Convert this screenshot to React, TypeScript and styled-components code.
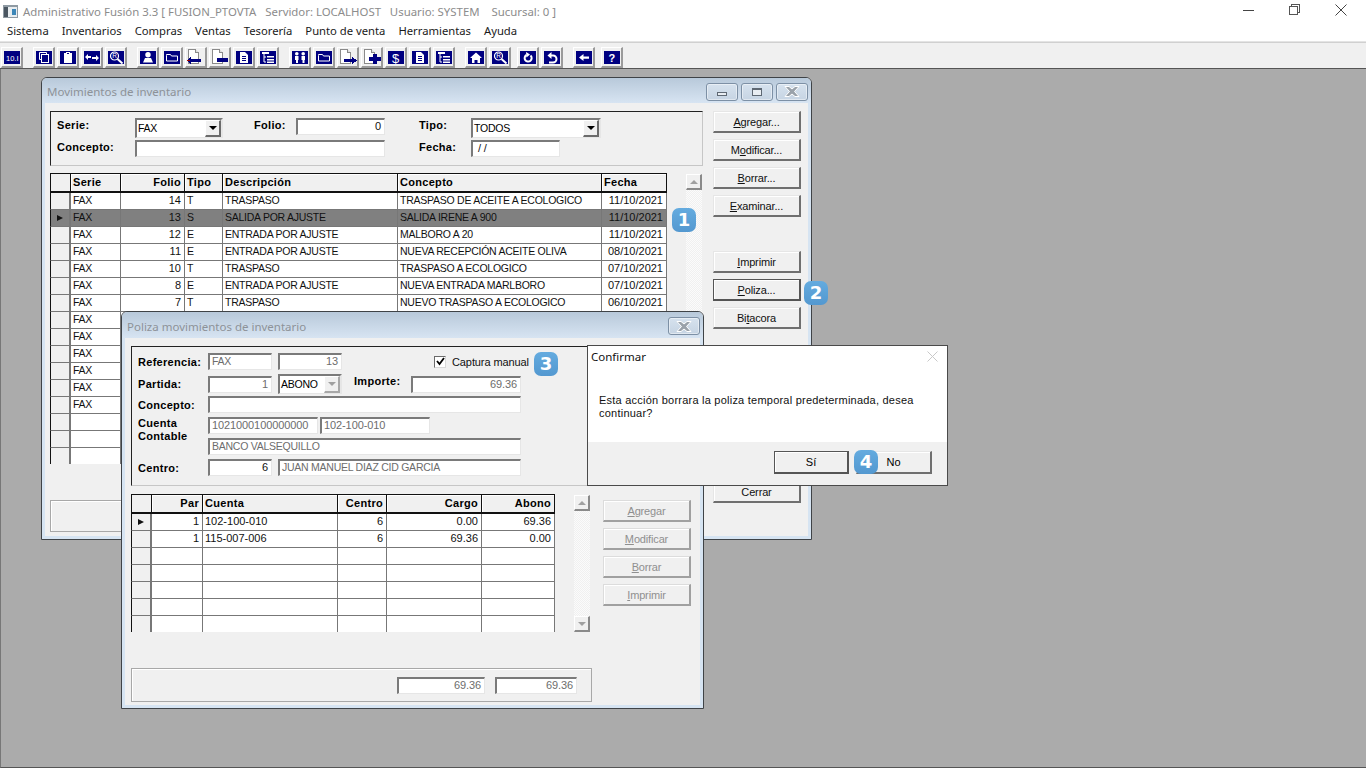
import React from "react";
import styled, { createGlobalStyle } from "styled-components";

const UI = `"Liberation Sans", Arial, sans-serif`;
const SEGOE = `"Noto Sans", "Open Sans", sans-serif`;

const Global = createGlobalStyle`
  html, body { margin: 0; padding: 0; height: 100%; overflow: hidden; }
  body { font-family: ${UI}; font-size: 11px; color: #000; background: #ababab; }
  #root { height: 100%; }
  * { box-sizing: border-box; }
`;

/* ---------- toolbar icons ---------- */

const Navy: React.FC<{ children: React.ReactNode }> = ({ children }) => (
  <svg width="16" height="13" viewBox="0 0 16 13">
    <rect width="16" height="13" fill="#000080" />
    {children}
  </svg>
);

const Paper: React.FC<{ children: React.ReactNode }> = ({ children }) => (
  <svg width="18" height="16" viewBox="0 0 18 16" shapeRendering="crispEdges">
    <path d="M1.5 .5h7l3 3v11h-10z" fill="#fff" stroke="#8a8a8a" />
    <path d="M8.5 .5v3h3" fill="#ddd" stroke="#8a8a8a" />
    {children}
  </svg>
);

const white = { fill: "#fff" };
const line = { fill: "none", stroke: "#fff" };

const docLines = (
  <Navy>
    <path d="M4 1h5l3 3v8H4z" {...white} />
    <path d="M6 5h4v1H6zM6 7h4v1H6zM6 9h4v1H6z" fill="#000080" />
  </Navy>
);
const tree = (
  <Navy>
    <path d="M2 1h7v2H2z" {...white} />
    <path d="M4 3v8h2M4 6h2" {...line} />
    <path d="M7 5h7v1.500H7zM7 8h7v1.500H7zM7 10.500h7v1.500H7z" {...white} />
  </Navy>
);
const folder = (
  <Navy>
    <path d="M2.500 4.500v-1h4l1 1.500h6v5h-11z" {...line} />
  </Navy>
);
const magnifier = (
  <Navy>
    <circle cx="6.500" cy="5" r="4" {...line} strokeWidth="1.200" />
    <text x="4.300" y="7.300" fontSize="6.500" fontFamily={UI} fill="#fff">R</text>
    <path d="M9.500 8l5 4.500" stroke="#fff" strokeWidth="2" />
  </Navy>
);

type Tool = { icon: React.ReactNode; gap?: number };

const tools: Tool[] = [
  { icon: <Navy><text x="2" y="9.500" fontSize="7.500" fontFamily={UI} fill="#fff">10.I</text></Navy> },
  { gap: 8, icon: <Navy><path d="M3.500 1.500h7v2M3.500 1.500v7h2" {...line} /><rect x="5.500" y="3.500" width="7" height="8" {...line} /></Navy> },
  { icon: <Navy><path d="M4 2h2V1h4v1h2v10H4z" {...white} /><path d="M7 2h2v1H7z" fill="#000080" /></Navy> },
  { icon: <Navy><path d="M1 6l3-3v2h3v2H4v2zM15 7l-3-3v2H8v2h4v2z" {...white} /></Navy> },
  { icon: magnifier },
  { gap: 8, icon: <Navy><circle cx="8" cy="3.700" r="2.700" {...white} /><path d="M3 11.500L5 7h6l2 4.500z" {...white} /></Navy> },
  { icon: folder },
  { icon: <Paper><path d="M4 8v2h10v3H4v2l-4-3.500z" fill="#000080" /><path d="M0 11h3v1H0z" fill="#a00000" /></Paper> },
  { icon: <Paper><path d="M6 9h11v4H6z" fill="#000080" /></Paper> },
  { icon: docLines },
  { icon: tree },
  { gap: 8, icon: <Navy><circle cx="4.800" cy="2.800" r="1.800" {...white} /><circle cx="11.200" cy="2.800" r="1.800" {...white} /><path d="M3 5h3.500v4H6v3H4V9H3zM9.500 5H13v4h-.5v3h-2V9h-1z" {...white} /></Navy> },
  { icon: folder },
  { icon: <Paper><path d="M13 8v2H5v3h8v2l5-3.500z" fill="#000080" /></Paper> },
  { icon: <Paper><path d="M10 5h4v3h4v4h-4v3h-4v-3H6V8h4z" fill="#000080" /></Paper> },
  { icon: <Navy><text x="4" y="11.500" fontSize="13" fontFamily={UI} fill="#fff">$</text></Navy> },
  { icon: docLines },
  { icon: tree },
  { gap: 8, icon: <Navy><path d="M8 1.500l6 5.500h-2v5H9.500V9h-3v3H4V7H2z" {...white} /></Navy> },
  { icon: magnifier },
  { gap: 4, icon: <Navy><path d="M10.500 4.500a3.500 3.500 0 1 1-4-.5" {...line} strokeWidth="2" /><path d="M6 1l4 2.500L6.500 6.500z" {...white} /></Navy> },
  { icon: <Navy><path d="M6 4.500h3a3 3 0 0 1 0 7H5" {...line} strokeWidth="2" /><path d="M7.500 1L3.500 4.500 7.500 8z" {...white} /></Navy> },
  { gap: 8, icon: <Navy><path d="M3 6.500L7.500 3v2.500H13v2.200H7.500V10z" {...white} /></Navy> },
  { gap: 4, icon: <Navy><text x="4.500" y="11" fontSize="11" fontWeight="700" fontFamily={UI} fill="#fff">?</text></Navy> },
];

/* ---------- data ---------- */

const movimientos = [
  ["FAX", "14", "T", "TRASPASO", "TRASPASO DE ACEITE A ECOLOGICO", "11/10/2021"],
  ["FAX", "13", "S", "SALIDA POR AJUSTE", "SALIDA IRENE A 900", "11/10/2021"],
  ["FAX", "12", "E", "ENTRADA POR AJUSTE", "MALBORO A 20", "11/10/2021"],
  ["FAX", "11", "E", "ENTRADA POR AJUSTE", "NUEVA RECEPCIÓN ACEITE OLIVA", "08/10/2021"],
  ["FAX", "10", "T", "TRASPASO", "TRASPASO A ECOLOGICO", "07/10/2021"],
  ["FAX", "8", "E", "ENTRADA POR AJUSTE", "NUEVA ENTRADA MARLBORO", "07/10/2021"],
  ["FAX", "7", "T", "TRASPASO", "NUEVO TRASPASO A ECOLOGICO", "06/10/2021"],
  ["FAX", "", "", "", "", ""],
  ["FAX", "", "", "", "", ""],
  ["FAX", "", "", "", "", ""],
  ["FAX", "", "", "", "", ""],
  ["FAX", "", "", "", "", ""],
  ["FAX", "", "", "", "", ""],
  ["", "", "", "", "", ""],
  ["", "", "", "", "", ""],
  ["", "", "", "", "", ""],
];

const partidas = [
  ["1", "102-100-010", "6", "0.00", "69.36"],
  ["1", "115-007-006", "6", "69.36", "0.00"],
  ["", "", "", "", ""],
  ["", "", "", "", ""],
  ["", "", "", "", ""],
  ["", "", "", "", ""],
  ["", "", "", "", ""],
];

type Col = { title: string; right?: boolean; cellRight?: boolean; width: number };

const movCols: Col[] = [
  { title: "Serie", width: 50 },
  { title: "Folio", right: true, cellRight: true, width: 64 },
  { title: "Tipo", width: 38 },
  { title: "Descripción", width: 175 },
  { title: "Concepto", width: 204 },
  { title: "Fecha", cellRight: true, width: 65 },
];

const parCols: Col[] = [
  { title: "Par", right: true, cellRight: true, width: 51 },
  { title: "Cuenta", width: 135 },
  { title: "Centro", right: true, cellRight: true, width: 49 },
  { title: "Cargo", right: true, cellRight: true, width: 95 },
  { title: "Abono", right: true, cellRight: true, width: 73 },
];

const menus = ["Sistema", "Inventarios", "Compras", "Ventas", "Tesorería", "Punto de venta", "Herramientas", "Ayuda"];

const isNum = (s: string) => /^[\d./-]+$/.test(s);

/* ---------- parts ---------- */

const DataGrid: React.FC<{
  cols: Col[];
  rows: string[][];
  indicatorWidth: number;
  current: number;
  highlight?: boolean;
}> = ({ cols, rows, indicatorWidth, current, highlight }) => (
  <GridBox $template={`${indicatorWidth}px ${cols.map((c) => c.width + "px").join(" ")}`}>
    <Corner />
    {cols.map((c) => (
      <HeadCell key={c.title} $right={c.right}>{c.title}</HeadCell>
    ))}
    {rows.map((row, i) => (
      <React.Fragment key={i}>
        <RowMark $dark={highlight && i === current}>
          {i === current && <MarkArrow />}
        </RowMark>
        {row.map((cell, j) => (
          <Cell key={j} $right={cols[j].cellRight} $on={highlight && i === current} $num={isNum(cell)}>{cell}</Cell>
        ))}
      </React.Fragment>
    ))}
  </GridBox>
);

const ScrollBar: React.FC<{ down?: boolean }> = ({ down }) => (
  <ScrollTrack>
    <ScrollBtn><ArrowUp /></ScrollBtn>
    {down && <ScrollBtn><ArrowDown /></ScrollBtn>}
  </ScrollTrack>
);

const WinClose = () => (
  <svg width="20" height="13" viewBox="0 0 20 13">
    <path d="M3 1.500h4L10 4l3-2.500h4L12.500 6.500 17 11.500h-4L10 9l-3 2.500H3l4.500-5z" fill="#9aa2aa" stroke="#fff" strokeWidth="1" />
  </svg>
);

export default function App() {
  return (
    <Root>
      <Global />
      <TitleBar>
        <AppIcon>
          <svg width="15" height="13" viewBox="0 0 15 13" shapeRendering="crispEdges">
            <rect width="15" height="13" fill="#8f9aa3" />
            <rect x="1" y="2" width="13" height="10" fill="#e8edf0" />
            <rect x="1" y="2" width="4" height="10" fill="#4a5661" />
            <rect x="9" y="4" width="4" height="6" fill="#3d87b8" />
          </svg>
        </AppIcon>
        <AppTitle>Administrativo Fusión 3.3 [ FUSION_PTOVTA&nbsp;&nbsp; Servidor: LOCALHOST&nbsp;&nbsp; Usuario: SYSTEM&nbsp;&nbsp;&nbsp; Sucursal: 0 ]</AppTitle>
        <Caption>
          <CaptionBtn>
            <svg width="12" height="12" viewBox="0 0 12 12" shapeRendering="crispEdges"><path d="M0 6.500h11" stroke="#444" /></svg>
          </CaptionBtn>
          <CaptionBtn>
            <svg width="12" height="12" viewBox="0 0 12 12" shapeRendering="crispEdges" fill="none" stroke="#555"><path d="M.5 2.500h8v8h-8zM2.500 2.500v-2h8v8h-2" /></svg>
          </CaptionBtn>
          <CaptionBtn>
            <svg width="12" height="12" viewBox="0 0 12 12" fill="none" stroke="#444"><path d="M.5.500l11 11M11.500.500l-11 11" /></svg>
          </CaptionBtn>
        </Caption>
      </TitleBar>
      <MenuBar>
        {menus.map((m) => (
          <MenuItem key={m}>{m}</MenuItem>
        ))}
      </MenuBar>
      <Toolbar>
        {tools.map((t, i) => (
          <ToolBtn key={i} $gap={t.gap}>{t.icon}</ToolBtn>
        ))}
      </Toolbar>

      <Desktop>
        <Window $left={41} $top={8} $width={771} $height={463}>
          <WinTitle>
            <WinTitleText>Movimientos de inventario</WinTitleText>
            <WinBtn><MinGlyph /></WinBtn>
            <WinBtn><MaxGlyph /></WinBtn>
            <WinBtn><WinClose /></WinBtn>
          </WinTitle>
          <MovBody>
            <MovMain>
              <FilterPanel>
                <Label>Serie:</Label>
                <Combo><ComboText>FAX</ComboText><ComboBtn><DropArrow /></ComboBtn></Combo>
                <span />
                <Label>Folio:</Label>
                <Field $right $num>0</Field>
                <span />
                <Label>Tipo:</Label>
                <Combo><ComboText>TODOS</ComboText><ComboBtn><DropArrow /></ComboBtn></Combo>
                <Label>Concepto:</Label>
                <FieldSpan />
                <span />
                <Label>Fecha:</Label>
                <DateField $num>&nbsp;/ /</DateField>
              </FilterPanel>
              <GridRow>
                <DataGrid cols={movCols} rows={movimientos} indicatorWidth={21} current={1} highlight />
                <ScrollBar />
              </GridRow>
              <StatusPanel />
            </MovMain>
            <Actions>
              <ActionBtn><u>A</u>gregar...</ActionBtn>
              <ActionBtn>M<u>o</u>dificar...</ActionBtn>
              <ActionBtn><u>B</u>orrar...</ActionBtn>
              <ActionBtn><u>E</u>xaminar...</ActionBtn>
              <ActionBtn $mt={28}><u>I</u>mprimir</ActionBtn>
              <ActionBtn $focus><u>P</u>oliza...</ActionBtn>
              <ActionBtn>Bi<u>t</u>acora</ActionBtn>
              <ActionBtn $push>Cerrar</ActionBtn>
            </Actions>
          </MovBody>
        </Window>

        <Window $left={121} $top={242} $width={583} $height={398}>
          <WinTitle $tall>
            <WinTitleText>Poliza movimientos de inventario</WinTitleText>
            <WinBtn><WinClose /></WinBtn>
          </WinTitle>
          <PolBody>
            <PolPanel>
              <PolRow>
                <PolLabel>Referencia:</PolLabel>
                <Field $w={64} $off>FAX</Field>
                <Field $w={64} $right $off $num>13</Field>
                <CheckWrap>
                  <CheckBox>
                    <svg width="9" height="9" viewBox="0 0 9 9"><path d="M1 4l2.500 3L8 1" fill="none" stroke="#000" strokeWidth="1.800" /></svg>
                  </CheckBox>
                  Captura manual
                </CheckWrap>
              </PolRow>
              <PolRow $mt={4}>
                <PolLabel>Partida:</PolLabel>
                <Field $w={64} $right $off $num>1</Field>
                <Combo $w={64}><ComboText $tight>ABONO</ComboText><ComboBtn $off><DropArrow $off /></ComboBtn></Combo>
                <ImporteLabel>Importe:</ImporteLabel>
                <Field $w={110} $right $off $num>69.36</Field>
              </PolRow>
              <PolRow $mt={2}>
                <PolLabel>Concepto:</PolLabel>
                <Field $w={313} />
              </PolRow>
              <CuentaBlock>
                <CuentaLabel>Cuenta Contable</CuentaLabel>
                <CuentaFields>
                  <CuentaTop>
                    <Field $w={110} $off $num>1021000100000000</Field>
                    <Field $w={110} $off $num>102-100-010</Field>
                  </CuentaTop>
                  <Field $w={313} $off>BANCO VALSEQUILLO</Field>
                </CuentaFields>
              </CuentaBlock>
              <PolRow $mt={4}>
                <PolLabel>Centro:</PolLabel>
                <Field $w={64} $right $num>6</Field>
                <Field $w={243} $off>JUAN MANUEL DIAZ CID GARCIA</Field>
              </PolRow>
            </PolPanel>
            <PolGridRow>
              <DataGrid cols={parCols} rows={partidas} indicatorWidth={21} current={0} />
              <ScrollBar down />
              <PolActions>
                <ActionBtn $off><u>A</u>gregar</ActionBtn>
                <ActionBtn $off><u>M</u>odificar</ActionBtn>
                <ActionBtn $off><u>B</u>orrar</ActionBtn>
                <ActionBtn $off><u>I</u>mprimir</ActionBtn>
              </PolActions>
            </PolGridRow>
            <TotalsPanel>
              <Field $w={88} $right $off $num>69.36</Field>
              <Field $w={82} $right $off $num>69.36</Field>
            </TotalsPanel>
          </PolBody>
        </Window>

        <Dialog>
          <DialogHead>
            <DialogTitle>Confirmar</DialogTitle>
            <svg width="11" height="11" viewBox="0 0 11 11" fill="none" stroke="#c9c9c9"><path d="M.5.500l10 10M10.500.500l-10 10" /></svg>
          </DialogHead>
          <DialogMsg>Esta acción borrara la poliza temporal predeterminada, desea continuar?</DialogMsg>
          <DialogFoot>
            <DialogBtn $def>Sí</DialogBtn>
            <DialogBtn>No</DialogBtn>
          </DialogFoot>
        </Dialog>

        <Badge $x={671} $y={139}>1</Badge>
        <Badge $x={803} $y={212}>2</Badge>
        <Badge $x={533} $y={283}>3</Badge>
        <Badge $x={853} $y={381}>4</Badge>
      </Desktop>
    </Root>
  );
}

/* ---------- styles ---------- */

const Root = styled.div`
  height: 100%;
  display: flex;
  flex-direction: column;
`;

const TitleBar = styled.div`
  height: 22px;
  background: #fff;
  display: flex;
  align-items: center;
  padding-left: 3px;
`;

const AppIcon = styled.div`
  width: 20px;
  height: 13px;
  display: flex;
`;

const AppTitle = styled.div`
  font-family: ${SEGOE};
  font-size: 11.4px;
  color: #8c8c8c;
  white-space: pre;
  flex: 1;
`;

const Caption = styled.div`
  display: flex;
  margin-top: -3px;
  padding-right: 2px;
`;

const CaptionBtn = styled.div`
  width: 46px;
  display: flex;
  justify-content: center;
`;

const MenuBar = styled.div`
  height: 20px;
  background: #fff;
  display: flex;
  align-items: center;
  gap: 13px;
  padding: 0 7px 2px;
  border-bottom: 1px solid #e4e4e4;
`;

const MenuItem = styled.span`
  font-family: ${SEGOE};
  font-size: 11.25px;
  color: #1a1a1a;
`;

const Toolbar = styled.div`
  height: 27px;
  background: #f0f0f0;
  border-top: 1px solid #d0d0d0;
  border-bottom: 1px solid #555;
  display: flex;
  align-items: flex-end;
  padding-left: 1px;
`;

const ToolBtn = styled.div<{ $gap?: number }>`
  width: 22px;
  height: 21px;
  margin: 0 2px 0 ${(p) => p.$gap ?? 0}px;
  display: flex;
  align-items: center;
  justify-content: center;
  background: #f0f0f0;
  border-style: solid;
  border-width: 1px 2px 2px 1px;
  border-color: #fff #9a9a9a #9a9a9a #fff;
`;

const Desktop = styled.div`
  flex: 1;
  position: relative;
  background: #ababab;
  border-left: 1px solid #777;
  border-bottom: 1px solid #555;
`;

const Window = styled.div<{ $left: number; $top: number; $width: number; $height: number }>`
  position: absolute;
  left: ${(p) => p.$left - 1}px;
  top: ${(p) => p.$top}px;
  width: ${(p) => p.$width}px;
  height: ${(p) => p.$height}px;
  border: 1px solid #3f4347;
  border-radius: 6px 6px 0 0;
  background: #f0f0f0;
  display: flex;
  flex-direction: column;
  overflow: hidden;
`;

const WinTitle = styled.div<{ $tall?: boolean }>`
  height: ${(p) => (p.$tall ? 26 : 25)}px;
  flex: none;
  background: linear-gradient(#b8c9da, #d7e4f2);
  display: flex;
  align-items: center;
  gap: 3px;
  padding: 2px 3px 0 5px;
`;

const WinTitleText = styled.div`
  flex: 1;
  font-family: ${SEGOE};
  font-size: 11.5px;
  color: #8d9298;
`;

const WinBtn = styled.div`
  width: 32px;
  height: 18px;
  border: 1px solid #7d90a5;
  border-radius: 3px;
  background: linear-gradient(#d6e2ee, #c6d4e3);
  box-shadow: inset 0 0 0 1px rgba(255, 255, 255, 0.45);
  display: flex;
  align-items: center;
  justify-content: center;
`;

const MinGlyph = styled.span`
  width: 10px;
  height: 4px;
  margin-top: 4px;
  background: #e8edf2;
  border: 1px solid #5e6873;
`;

const MaxGlyph = styled.span`
  width: 10px;
  height: 8px;
  background: #e8edf2;
  border: 1px solid #5e6873;
  border-top-width: 2px;
`;

const MovBody = styled.div`
  flex: 1;
  display: flex;
  gap: 10px;
  padding: 8px 6px 0 5px;
  border: solid #d6e4f2;
  border-width: 0 3px 3px;
`;

const MovMain = styled.div`
  width: 653px;
  display: flex;
  flex-direction: column;
`;

const FilterPanel = styled.div`
  height: 55px;
  flex: none;
  display: grid;
  grid-template-columns: 78px 88px 31px 42px 89px 34px 52px 130px;
  grid-template-rows: 22px 18px;
  align-items: start;
  padding: 6px 0 0 6px;
  border: 1px solid;
  border-color: #222 #c6c6c6 #c6c6c6 #222;
`;

const Label = styled.span`
  font-weight: 700;
  font-size: 11px;
  line-height: 14px;
  letter-spacing: 0.3px;
`;

const Field = styled.span<{ $w?: number; $right?: boolean; $off?: boolean; $num?: boolean }>`
  display: block;
  flex: none;
  width: ${(p) => (p.$w ? `${p.$w}px` : "auto")};
  height: 17px;
  line-height: 13px;
  padding: 0 3px 0 2px;
  background: #fff;
  text-align: ${(p) => (p.$right ? "right" : "left")};
  color: ${(p) => (p.$off ? "#6d6d6d" : "#111")};
  white-space: nowrap;
  overflow: hidden;
  border: solid;
  border-width: 2px 1px 1px 2px;
  border-color: #7a7a7a #e6e6e6 #e6e6e6 #7a7a7a;
  font-size: ${(p) => (p.$num ? 11 : 10.5)}px;
  letter-spacing: ${(p) => (p.$num ? -0.1 : -0.25)}px;
`;

const FieldSpan = styled(Field)`
  grid-column: 2 / 6;
`;

const DateField = styled(Field)`
  width: 89px;
`;

const Combo = styled.span<{ $w?: number }>`
  display: flex;
  flex: none;
  width: ${(p) => (p.$w ? `${p.$w}px` : "auto")};
  height: 20px;
  background: #fff;
  border: solid;
  border-width: 2px 2px 1px 2px;
  border-color: #7a7a7a #e6e6e6 #e6e6e6 #7a7a7a;
`;

const ComboText = styled.span<{ $tight?: boolean }>`
  flex: 1;
  line-height: ${(p) => (p.$tight ? 16 : 17)}px;
  padding-left: 1px;
  font-size: 10.5px;
  letter-spacing: -0.25px;
`;

const ComboBtn = styled.span<{ $off?: boolean }>`
  width: 16px;
  display: flex;
  align-items: center;
  justify-content: center;
  background: #f0f0f0;
  border: solid;
  border-width: 1px 2px 2px 1px;
  border-color: #fff #6b6b6b #6b6b6b #fff;
  ${(p) => p.$off && "border-color: #fff #a8a8a8 #a8a8a8 #fff;"}
`;

const DropArrow = styled.span<{ $off?: boolean }>`
  width: 0;
  height: 0;
  border-left: 4px solid transparent;
  border-right: 4px solid transparent;
  border-top: 4px solid ${(p) => (p.$off ? "#a0a0a0" : "#000")};
`;

const GridRow = styled.div`
  margin-top: 7px;
  height: 291px;
  flex: none;
  display: flex;
  gap: 19px;
  overflow: hidden;
`;

const GridBox = styled.div<{ $template: string }>`
  display: grid;
  grid-template-columns: ${(p) => p.$template};
  grid-auto-rows: 17px;
  grid-template-rows: 19px;
  align-content: start;
  border-top: 1px solid #111;
  background: #fff;
  flex: none;
  overflow: hidden;
`;

const Corner = styled.div`
  background: #f0f0f0;
  border-left: 1px solid #111;
  border-right: 1px solid #111;
  border-bottom: 2px solid #111;
`;

const HeadCell = styled.div<{ $right?: boolean }>`
  background: #f0f0f0;
  font-weight: 700;
  font-size: 11px;
  letter-spacing: 0.3px;
  line-height: 16px;
  padding: 0 3px 0 2px;
  text-align: ${(p) => (p.$right ? "right" : "left")};
  border-bottom: 2px solid #111;
  border-right: 1px solid #111;
  box-shadow: inset 1px 1px 0 #fff;
  white-space: nowrap;
`;

const RowMark = styled.div<{ $dark?: boolean }>`
  background: ${(p) => (p.$dark ? "#808080" : "#f0f0f0")};
  border-left: 1px solid #111;
  border-right: 2px solid #777;
  border-bottom: 1px solid #777;
  display: flex;
  align-items: center;
  justify-content: center;
`;

const MarkArrow = styled.span`
  width: 0;
  height: 0;
  border-left: 6px solid #111;
  border-top: 3px solid transparent;
  border-bottom: 3px solid transparent;
`;

const Cell = styled.div<{ $right?: boolean; $on?: boolean; $num?: boolean }>`
  background: ${(p) => (p.$on ? "#808080" : "#fff")};
  color: #111;
  line-height: 14px;
  padding: 0 3px 0 2px;
  text-align: ${(p) => (p.$right ? "right" : "left")};
  border-right: 1px solid #777;
  border-bottom: 1px solid #777;
  white-space: nowrap;
  overflow: hidden;
  font-size: ${(p) => (p.$num ? 11 : 10.5)}px;
  letter-spacing: ${(p) => (p.$num ? 0 : -0.25)}px;
`;

const ScrollTrack = styled.div`
  width: 16px;
  flex: none;
  margin-top: 1px;
  display: flex;
  flex-direction: column;
  justify-content: space-between;
  background: repeating-conic-gradient(#f0f0f0 0 25%, #fbfbfb 0 50%) 0 0 / 2px 2px;
`;

const ScrollBtn = styled.div`
  height: 16px;
  background: #f0f0f0;
  border: solid;
  border-width: 1px 2px 2px 1px;
  border-color: #fff #8a8a8a #8a8a8a #fff;
  display: flex;
  align-items: center;
  justify-content: center;
`;

const ArrowUp = styled.span`
  border-left: 4px solid transparent;
  border-right: 4px solid transparent;
  border-bottom: 4px solid #a0a0a0;
`;

const ArrowDown = styled.span`
  border-left: 4px solid transparent;
  border-right: 4px solid transparent;
  border-top: 4px solid #a0a0a0;
`;

const StatusPanel = styled.div`
  margin-top: 36px;
  height: 32px;
  flex: none;
  border: 1px solid #a8a8a8;
  box-shadow: inset 1px 1px 0 #fff;
`;

const Actions = styled.div`
  width: 88px;
  height: 392px;
  display: flex;
  flex-direction: column;
  gap: 6px;
`;

const ActionBtn = styled.div<{ $mt?: number; $focus?: boolean; $push?: boolean; $off?: boolean }>`
  height: 22px;
  flex: none;
  margin-top: ${(p) => (p.$push ? "auto" : `${p.$mt ?? 0}px`)};
  background: #f0f0f0;
  display: flex;
  align-items: center;
  justify-content: center;
  white-space: pre;
  font-size: 11px;
  letter-spacing: -0.15px;
  color: ${(p) => (p.$off ? "#8f8f8f" : "#111")};
  border: solid;
  border-width: 1px 2px 2px 1px;
  border-color: ${(p) => (p.$focus ? "#555" : "#e6e6e6 #6f6f6f #6f6f6f #e6e6e6")};
  ${(p) => p.$off && "border-color: #dcdcdc #a0a0a0 #a0a0a0 #dcdcdc;"}
  box-shadow: inset 1px 1px 0 #fff;
`;

const PolBody = styled.div`
  flex: 1;
  display: flex;
  flex-direction: column;
  padding: 8px 0 0 6px;
  border: solid #d6e4f2;
  border-width: 0 3px 3px;
`;

const PolPanel = styled.div`
  width: 462px;
  height: 140px;
  flex: none;
  padding: 6px 0 0 6px;
  border: 1px solid;
  border-color: #222 #c6c6c6 #c6c6c6 #222;
`;

const PolRow = styled.div<{ $mt?: number }>`
  display: flex;
  align-items: center;
  gap: 6px;
  margin-top: ${(p) => p.$mt ?? 0}px;
`;

const PolLabel = styled.span`
  width: 64px;
  flex: none;
  font-weight: 700;
  letter-spacing: 0.3px;
  white-space: nowrap;
`;

const ImporteLabel = styled(PolLabel)`
  width: 57px;
  margin-left: 6px;
  margin-right: -6px;
  padding-bottom: 6px;
`;

const CheckWrap = styled.span`
  margin-left: 86px;
  display: flex;
  align-items: center;
  gap: 6px;
  font-size: 11px;
  letter-spacing: -0.1px;
  color: #111;
`;

const CheckBox = styled.span`
  width: 12px;
  height: 12px;
  background: #fff;
  border: 1px solid;
  border-color: #6a6a6a #d8d8d8 #d8d8d8 #6a6a6a;
  display: flex;
  align-items: center;
  justify-content: center;
`;

const CuentaBlock = styled.div`
  display: flex;
  gap: 6px;
  margin-top: 4px;
`;

const CuentaLabel = styled(PolLabel)`
  white-space: normal;
  line-height: 13px;
`;

const CuentaFields = styled.div`
  display: flex;
  flex-direction: column;
  gap: 4px;
`;

const CuentaTop = styled.div`
  display: flex;
  gap: 2px;
`;

const PolGridRow = styled.div`
  margin-top: 8px;
  height: 138px;
  flex: none;
  display: flex;
  gap: 19px;
`;

const PolActions = styled.div`
  margin: 6px 0 0 -6px;
  width: 88px;
  display: flex;
  flex-direction: column;
  gap: 6px;
`;

const TotalsPanel = styled.div`
  margin-top: 36px;
  width: 461px;
  height: 34px;
  flex: none;
  display: flex;
  justify-content: flex-end;
  align-items: center;
  gap: 10px;
  padding-right: 14px;
  border: 1px solid #a8a8a8;
  box-shadow: inset 1px 1px 0 #fff;
`;

const Dialog = styled.div`
  position: absolute;
  left: 586px;
  top: 276px;
  width: 361px;
  height: 141px;
  background: #fff;
  border: 1px solid #4a4a4a;
  display: flex;
  flex-direction: column;
`;

const DialogHead = styled.div`
  height: 24px;
  display: flex;
  align-items: center;
  justify-content: space-between;
  padding: 0 9px 3px 3px;
  flex: none;
`;

const DialogTitle = styled.span`
  font-family: ${SEGOE};
  font-size: 11.5px;
  color: #111;
`;

const DialogMsg = styled.div`
  flex: 1;
  padding: 24px 24px 0 11px;
  font-size: 11px;
  line-height: 13px;
  letter-spacing: 0.23px;
  color: #111;
`;

const DialogFoot = styled.div`
  height: 43px;
  flex: none;
  background: #f0f0f0;
  display: flex;
  justify-content: flex-end;
  gap: 7px;
  padding: 9px 15px 0 0;
`;

const DialogBtn = styled.div<{ $def?: boolean }>`
  width: ${(p) => (p.$def ? 75 : 76)}px;
  height: 23px;
  background: #f0f0f0;
  display: flex;
  align-items: center;
  justify-content: center;
  font-size: 11px;
  border: solid;
  border-width: 1px 2px 2px 1px;
  border-color: ${(p) => (p.$def ? "#555" : "#e6e6e6 #6f6f6f #6f6f6f #e6e6e6")};
  box-shadow: inset 1px 1px 0 #fff;
`;

const Badge = styled.div<{ $x: number; $y: number }>`
  position: absolute;
  left: ${(p) => p.$x}px;
  top: ${(p) => p.$y}px;
  width: 24px;
  height: 24px;
  border-radius: 7px;
  background: linear-gradient(#64abdf, #5398d0);
  color: #fff;
  font-weight: 700;
  font-size: 18px;
  line-height: 24px;
  text-align: center;
  font-family: "DejaVu Sans", sans-serif;
`;
